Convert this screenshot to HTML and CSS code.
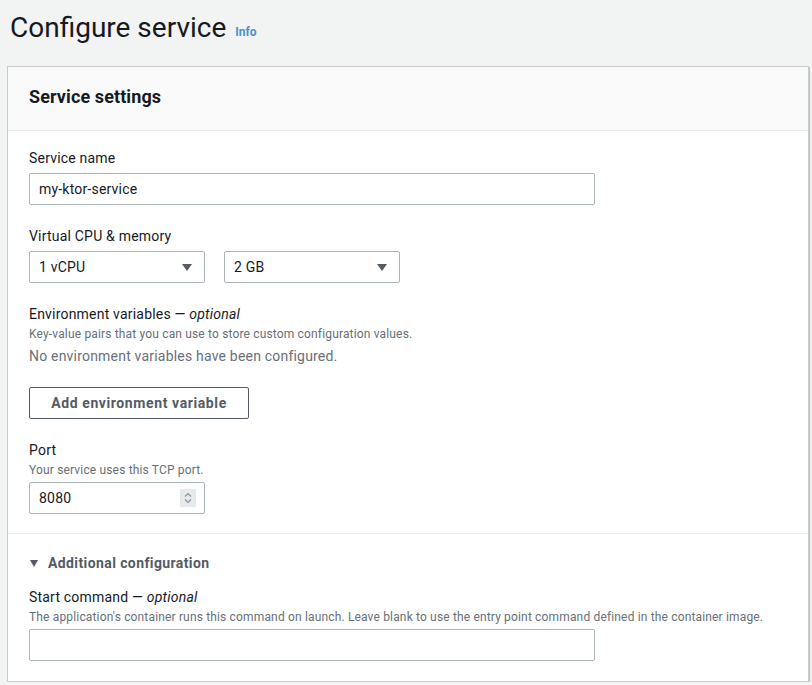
FILE: index.html
```html
<!DOCTYPE html>
<html>
<head>
<meta charset="utf-8">
<link rel="stylesheet" href="styles.css">
</head>
<body>
<div class="page">
  <h1 class="title">Configure service <a class="info">Info</a></h1>
  <div class="card">
    <div class="card-header"><h2>Service settings</h2></div>
    <div class="section">
      <div class="field">
        <div class="label">Service name</div>
        <div class="input wide">my-ktor-service</div>
      </div>
      <div class="field">
        <div class="label">Virtual CPU &amp; memory</div>
        <div class="row">
          <div class="input select">1 vCPU<span class="caret"></span></div>
          <div class="input select">2 GB<span class="caret"></span></div>
        </div>
      </div>
      <div class="field">
        <div class="label">Environment variables — <i>optional</i></div>
        <div class="desc">Key-value pairs that you can use to store custom configuration values.</div>
        <div class="empty">No environment variables have been configured.</div>
        <button class="btn">Add environment variable</button>
      </div>
      <div class="field last">
        <div class="label">Port</div>
        <div class="desc">Your service uses this TCP port.</div>
        <div class="input small">8080
          <span class="spin"><svg width="10" height="14" viewBox="0 0 10 14"><path d="M2 5.5 L5 2.5 L8 5.5 M2 8.5 L5 11.5 L8 8.5" fill="none" stroke="#879196" stroke-width="1.1"/></svg></span>
        </div>
      </div>
    </div>
    <div class="section second">
      <div class="expander"><span class="tri"></span>Additional configuration</div>
      <div class="field last">
        <div class="label">Start command — <i>optional</i></div>
        <div class="desc">The application's container runs this command on launch. Leave blank to use the entry point command defined in the container image.</div>
        <div class="input wide"></div>
      </div>
    </div>
  </div>
</div>
</body>
</html>
```
FILE: styles.css
```css
html, body {
  margin: 0;
  padding: 0;
  background: #f2f3f3;
  font-family: Roboto, "Liberation Sans", sans-serif;
  color: #16191f;
}
.page {
  padding: 0 3px 0 7px;
}
.title {
  margin: 0;
  padding: 10px 0 0 3px;
  height: 56px;
  box-sizing: border-box;
  font-size: 28px;
  font-weight: 400;
  line-height: 36px;
  color: #16191f;
}
.info {
  font-size: 12px;
  font-weight: 700;
  color: #4a90d0;
  margin-left: 2px;
  vertical-align: 1px;
}
.card {
  background: #fff;
  border: 1px solid #c8cccc;
  box-shadow: 1px 1px 1px rgba(0,28,36,0.2);
  margin-top: 10px;
}
.card-header {
  height: 64px;
  box-sizing: border-box;
  background: #fafafa;
  border-bottom: 1px solid #eaeded;
  display: flex;
  align-items: center;
  padding: 0 0 4px 21px;
}
.card-header h2 {
  margin: 0;
  font-size: 18px;
  font-weight: 700;
  letter-spacing: 0.1px;
}
.section {
  padding: 17px 21px 19px;
}
.section.second {
  border-top: 1px solid #eaeded;
  padding-top: 19px;
  padding-bottom: 20px;
}
.field {
  margin-bottom: 21px;
}
.field.last { margin-bottom: 0; }
.label {
  font-size: 14px;
  line-height: 20px;
  margin-bottom: 5px;
  letter-spacing: 0.2px;
}
.label i { font-style: italic; }
.desc {
  font-size: 12px;
  line-height: 16px;
  color: #687078;
  margin-top: -3px;
  margin-bottom: 4px;
  letter-spacing: 0.16px;
}
.empty {
  font-size: 14px;
  line-height: 20px;
  color: #687078;
  margin-top: 0;
  letter-spacing: 0.2px;
}
.input {
  box-sizing: border-box;
  height: 32px;
  border: 1px solid #aab7b8;
  border-radius: 2px;
  background: #fff;
  font-size: 14px;
  line-height: 30px;
  padding: 0 9px;
  position: relative;
  letter-spacing: 0.2px;
}
.input.wide { width: 566px; }
.input.small { width: 176px; }
.row { display: flex; gap: 19px; }
.select { width: 176px; }
.caret {
  position: absolute;
  right: 12px;
  top: 12px;
  width: 0;
  height: 0;
  border-left: 5px solid transparent;
  border-right: 5px solid transparent;
  border-top: 7px solid #545b64;
}
.btn {
  margin-top: 21px;
  height: 32px;
  width: 220px;
  border: 1px solid #545b64;
  border-radius: 2px;
  background: #fff;
  color: #545b64;
  font-family: Roboto, "Liberation Sans", sans-serif;
  font-size: 14px;
  font-weight: 700;
  letter-spacing: 0.6px;
  padding: 0;
}
.spin {
  position: absolute;
  right: 8px;
  top: 6px;
  width: 16px;
  height: 18px;
  background: #e6eaec;
  display: flex;
  align-items: center;
  justify-content: center;
}
.expander {
  font-size: 14px;
  font-weight: 700;
  color: #545b64;
  line-height: 20px;
  letter-spacing: 0.4px;
  display: flex;
  align-items: center;
  margin-bottom: 14px;
}
.tri {
  width: 0;
  height: 0;
  border-left: 4px solid transparent;
  border-right: 4px solid transparent;
  border-top: 7px solid #545b64;
  margin: 0 10px 0 1px;
}
```
